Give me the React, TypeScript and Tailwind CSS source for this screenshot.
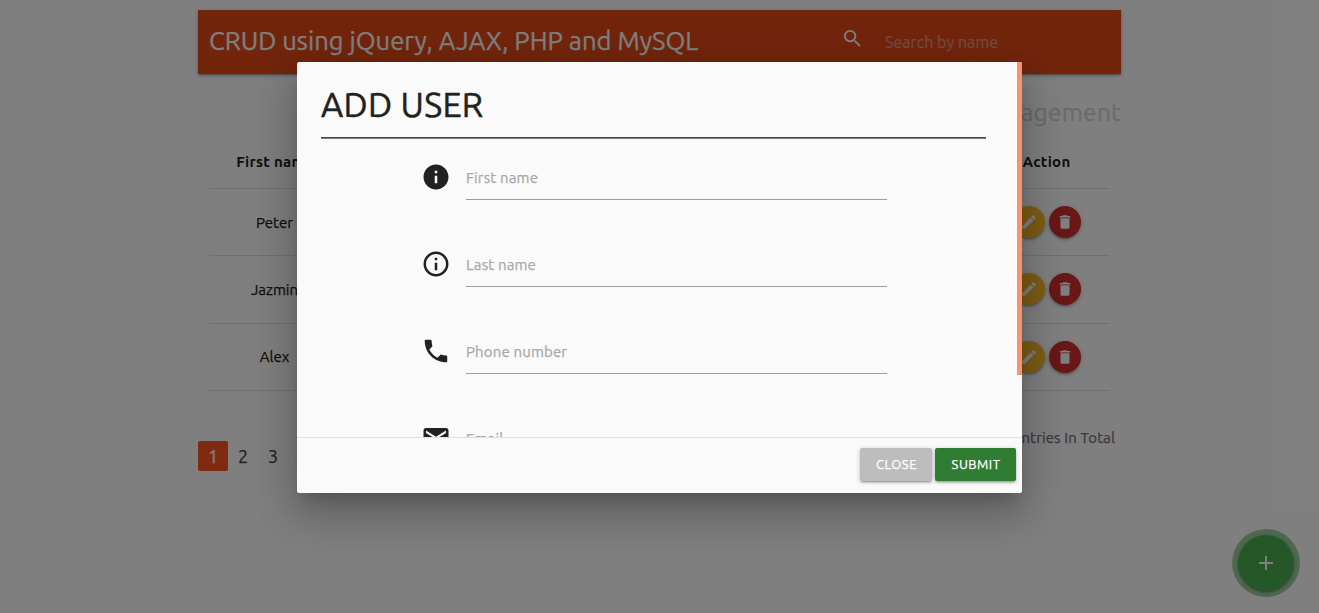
import React from 'react';
import { MdAdd, MdDelete, MdEdit, MdEmail, MdInfo, MdInfoOutline, MdPhone, MdSearch } from 'react-icons/md';
import type { IconType } from 'react-icons';

const people = ['Peter', 'Jazmin', 'Alex'];

const fields: { label: string; icon: IconType }[] = [
  { label: 'First name', icon: MdInfo },
  { label: 'Last name', icon: MdInfoOutline },
  { label: 'Phone number', icon: MdPhone },
  { label: 'Email', icon: MdEmail },
];

const raised = 'shadow-[0_2px_2px_0_rgba(0,0,0,0.14),0_3px_1px_-2px_rgba(0,0,0,0.12),0_1px_5px_0_rgba(0,0,0,0.2)]';

function NavBar() {
  return (
    <nav className={`flex h-16 items-center bg-[#e64a19] pl-[11px] text-white ${raised}`}>
      <h1 className="-mt-[2px] w-[631.5px] whitespace-nowrap text-[25.6px] leading-[60px] tracking-[0.02px]">
        CRUD using jQuery, AJAX, PHP and MySQL
      </h1>
      <MdSearch className="-mt-[8px] size-[23px] shrink-0" />
      <span className="ml-[21.5px] whitespace-nowrap text-[16px] tracking-[0.05px] text-[#e39a80]">Search by name</span>
    </nav>
  );
}

function PeopleTable() {
  return (
    <div className="mx-[11px] text-[15px] text-[#212121]">
      <div className="flex h-[54px] items-center justify-between border-b border-[#e0e0e0] pt-px font-bold tracking-[0.3px] [-webkit-text-stroke:0px]">
        <div className="w-[132px] text-center">First name</div>
        <div className="w-[127px] text-center">Action</div>
      </div>
      {people.map((name, i) => (
        <div key={name} className="flex h-[67.3px] items-center justify-between border-b border-[#e0e0e0]">
          <div className={`w-[131px] text-center ${i === 0 ? 'pt-[2px]' : 'pt-px'}`}>{name}</div>
          <div className="flex w-[127px] justify-center gap-1 text-white">
            <span className={`flex size-8 items-center justify-center rounded-full bg-[#fbb92d] ${raised}`}>
              <MdEdit className="size-[18px]" />
            </span>
            <span className={`flex size-8 items-center justify-center rounded-full bg-[#d32f2f] ${raised}`}>
              <MdDelete className="size-[18px]" />
            </span>
          </div>
        </div>
      ))}
    </div>
  );
}

function Pagination() {
  return (
    <div className="flex justify-between">
      <div className="mt-[50px] flex text-[18px] leading-[31px] text-[#444]">
        <span className="h-[30px] w-[30px] rounded-[2px] bg-[#ff5722] text-center text-white">1</span>
        <span className="w-[30px] text-center">2</span>
        <span className="w-[30px] text-center">3</span>
      </div>
      <p className="mr-[6px] mt-[36px] text-[15px] leading-[22px] tracking-[0.12px] text-[#757575]">3 Entries In Total</p>
    </div>
  );
}

function AddUserDialog() {
  return (
    <section className="mt-[62px] flex h-[431px] w-[725px] flex-col overflow-hidden rounded-[2px] bg-[#fafafa] text-[#212121] shadow-[0_24px_38px_3px_rgba(0,0,0,0.14),0_9px_46px_8px_rgba(0,0,0,0.12),0_11px_15px_-7px_rgba(0,0,0,0.2)]">
      <div className="flex h-[375px] shrink-0 justify-between overflow-hidden">
        <div className="ml-6 w-[665px]">
          <h2 className="h-[75px] pt-[21px] text-[34.2px] leading-[42px] tracking-[0.3px] [-webkit-text-stroke:0.5px]">
            ADD USER
          </h2>
          <hr className="h-[2px] border-0 border-t border-[#4a4a4d] bg-[#7c7c7f]" />
          <form className="ml-[100px] mt-[14px]">
            {fields.map(({ label, icon: Icon }) => (
              <div key={label} className="flex h-[87px]">
                <Icon className="mt-[9px] size-[30px] shrink-0" />
                <div className="ml-[15px] h-[47px] w-[421px] border-b border-[#9e9e9e] text-[15px] leading-[49px] tracking-[0.15px] text-[#a8a8a8]">
                  {label}
                </div>
              </div>
            ))}
          </form>
        </div>
        <div className="h-[313px] w-[5px] bg-[#f5946e]" />
      </div>
      <footer className="flex h-14 shrink-0 items-start justify-end gap-[3px] border-t border-[#e0e0e0] pr-[6px] pt-[10px] text-[13px] leading-[33px] tracking-[0.5px] text-white">
        <button type="button" className={`h-[33px] w-[72px] rounded-[2px] bg-[#bdbdbd] pl-px ${raised}`}>CLOSE</button>
        <button type="button" className={`h-[33px] w-[81px] rounded-[2px] bg-[#2e7d32] pl-px ${raised}`}>SUBMIT</button>
      </footer>
    </section>
  );
}

export default function App() {
  return (
    <div className="relative h-[613px] w-[1319px] overflow-hidden bg-white pt-[10px] font-['Ubuntu','Noto_Sans',sans-serif] [-webkit-text-stroke:0.25px]">
      <main className="ml-[198px] w-[923px]">
        <NavBar />
        <h2 className="h-[61px] pt-[20px] text-right text-[24.6px] leading-[36px] tracking-[0.2px] text-[#d6d6d6]">
          User Management
        </h2>
        <PeopleTable />
        <Pagination />
      </main>
      <button
        type="button"
        aria-label="Add user"
        className="absolute left-[1232px] top-[529px] flex size-[68px] items-center justify-center rounded-full bg-[#4caf50]/55 text-white"
      >
        <span className={`flex size-14 items-center justify-center rounded-full bg-[#4caf50] ${raised}`}>
          <MdAdd className="size-6" />
        </span>
      </button>
      <div className="absolute inset-0 flex items-start bg-black/50 pl-[297px]">
        <AddUserDialog />
      </div>
    </div>
  );
}
